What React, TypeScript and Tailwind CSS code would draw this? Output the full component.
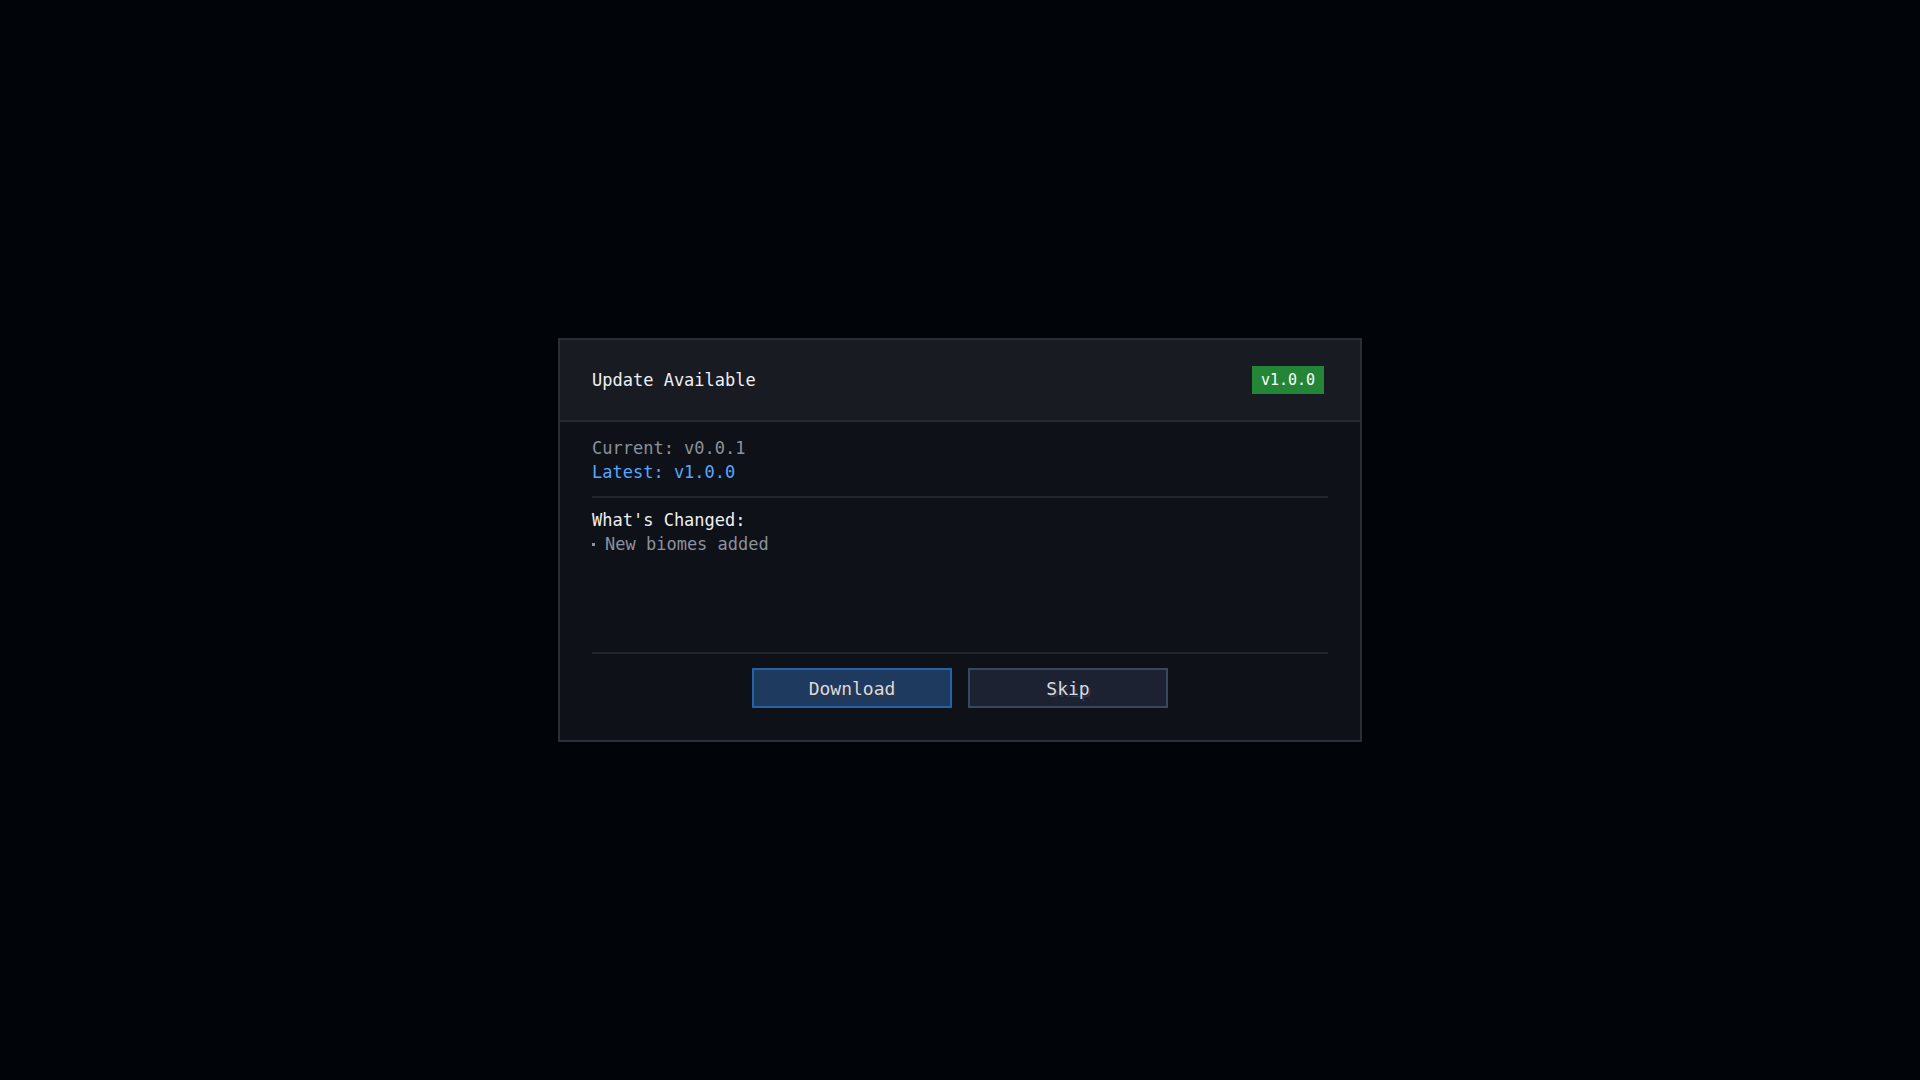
import React from "react";

const mono = "font-['DejaVu_Sans_Mono',monospace]";

export default function App() {
  return (
    <div className={`w-full h-screen bg-[#010409] flex items-center justify-center ${mono}`}>
      <div className="w-[804px] border-2 border-[#2a2e35] bg-[#0e1117] flex flex-col">
        <div className="h-[82px] bg-[#181b22] border-b-2 border-[#262a31] flex items-center justify-between pl-[32px] pr-[36px]">
          <span className="text-[17px] text-[#eef0f3] leading-none">Update Available</span>
          <span className="h-[28px] w-[72px] bg-[#238636] text-white text-[15px] flex items-center justify-center leading-none">
            v1.0.0
          </span>
        </div>
        <div className="flex flex-col px-[32px] pt-[14px] pb-[32px]">
          <div className="text-[17px] leading-[24px]">
            <div className="text-[#8b929c]">Current: v0.0.1</div>
            <div className="text-[#58a6ff]">Latest: v1.0.0</div>
          </div>
          <div className="mt-[12px] h-[2px] bg-[#21262d]" />
          <div className="h-[154px] pt-[10px] text-[17px] leading-[24px]">
            <div className="text-[#eef0f3]">What's Changed:</div>
            <div className="text-[#8b929c] flex items-center">
              <span className="inline-block w-[3px] h-[3px] bg-[#8b929c] mr-[10px]" />
              <span>New biomes added</span>
            </div>
          </div>
          <div className="h-[2px] bg-[#21262d]" />
          <div className="mt-[14px] flex justify-center gap-[16px]">
            <button className="w-[200px] h-[40px] bg-[#1e3a5f] border-2 border-[#2563a8] text-[18px] text-[#d6dae2] [text-shadow:2px_2px_0_#33373f] flex items-center justify-center">
              Download
            </button>
            <button className="w-[200px] h-[40px] bg-[#1c2232] border-2 border-[#38475c] text-[18px] text-[#d6dae2] [text-shadow:2px_2px_0_#33373f] flex items-center justify-center">
              Skip
            </button>
          </div>
        </div>
      </div>
    </div>
  );
}
